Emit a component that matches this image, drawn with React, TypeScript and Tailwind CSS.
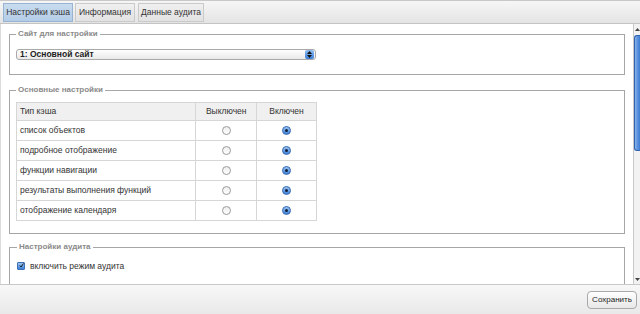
import React from "react";

const font = { fontFamily: '"Liberation Sans", Arial, sans-serif' };

function Radio({ checked }: { checked?: boolean }) {
  if (checked) {
    return (
      <span className="flex h-[9px] w-[9px] items-center justify-center rounded-full border border-[#3d6fb5] bg-gradient-to-b from-[#9cc4f0] to-[#3b7fd6]">
        <span className="h-[3px] w-[3px] rounded-full bg-[#12203a]" />
      </span>
    );
  }
  return (
    <span className="flex h-[9px] w-[9px] rounded-full border border-[#9a9a9a] bg-gradient-to-b from-[#eeeeee] to-[#ffffff]" />
  );
}

const rows = [
  "список объектов",
  "подробное отображение",
  "функции навигации",
  "результаты выполнения функций",
  "отображение календаря",
];

export default function App() {
  return (
    <div
      className="flex h-[314px] w-[640px] flex-col overflow-hidden bg-white text-[#333]"
      style={font}
    >
      {/* tab bar */}
      <div className="flex h-[24px] shrink-0 items-start gap-[2px] border-b border-t border-b-[#c4c4c4] border-t-[#c8c8c8] bg-gradient-to-b from-[#f6f6f6] to-[#e4e4e4] pl-[3px] pt-[2px]">
        <div className="flex h-[19px] w-[70px] items-center justify-center border border-[#98b4d2] bg-gradient-to-b from-[#c9dcef] to-[#b3cce6] text-[8.5px]">
          Настройки кэша
        </div>
        <div className="flex h-[19px] w-[60px] items-center justify-center border border-[#cacaca] bg-gradient-to-b from-[#f0f0f0] to-[#e2e2e2] text-[8.5px]">
          Информация
        </div>
        <div className="ml-[1px] flex h-[19px] w-[66px] items-center justify-center border border-[#cacaca] bg-gradient-to-b from-[#f0f0f0] to-[#e2e2e2] text-[8.5px]">
          Данные аудита
        </div>
      </div>

      {/* middle */}
      <div className="flex min-h-0 flex-1">
        <div className="min-w-0 flex-1 overflow-hidden border-l border-[#dcdcdc] pl-[8px] pr-[8px] pt-[5px]">
          {/* fieldset 1 */}
          <fieldset className="border border-[#a6a6a6] pb-[14px] pl-[6px]">
            <legend className="px-[2px] text-[8px] font-bold leading-[10px] text-[#8a8a8a]">
              Сайт для настройки
            </legend>
            <div className="mt-[10px] flex h-[11px] w-[300px] items-center justify-between rounded-[3px] border border-[#a9a9a9] bg-gradient-to-b from-[#ffffff] to-[#e9e9e9] pl-[3px]">
              <span className="text-[8.5px] font-semibold leading-none text-[#222]">
                1: Основной сайт
              </span>
              <span className="mr-[1px] flex h-[9px] w-[9px] flex-col items-center justify-center gap-[1px] rounded-[2px] bg-gradient-to-b from-[#8fbcf0] to-[#3a7ed8]">
                <svg width="5" height="3" viewBox="0 0 5 3">
                  <path d="M2.5 0 L5 3 L0 3 Z" fill="#111" />
                </svg>
                <svg width="5" height="3" viewBox="0 0 5 3">
                  <path d="M0 0 L5 0 L2.5 3 Z" fill="#111" />
                </svg>
              </span>
            </div>
          </fieldset>

          {/* fieldset 2 */}
          <fieldset className="mt-[10px] border border-[#a6a6a6] pb-[12px] pl-[6px]">
            <legend className="px-[2px] text-[8px] font-bold leading-[10px] text-[#8a8a8a]">
              Основные настройки
            </legend>
            <table className="mt-[7px] w-[301px] border-collapse text-[8.5px] text-[#333]">
              <thead>
                <tr className="h-[18px] bg-[#f0f0f0]">
                  <th className="w-[180px] border border-[#d6d6d6] pl-[3px] text-left font-normal">
                    Тип кэша
                  </th>
                  <th className="w-[61px] border border-[#d6d6d6] font-normal">
                    Выключен
                  </th>
                  <th className="w-[60px] border border-[#d6d6d6] font-normal">
                    Включен
                  </th>
                </tr>
              </thead>
              <tbody>
                {rows.map((r) => (
                  <tr key={r} className="h-[20px]">
                    <td className="border border-[#d6d6d6] pl-[3px]">{r}</td>
                    <td className="border border-[#d6d6d6] align-middle">
                      <div className="flex justify-center">
                        <Radio />
                      </div>
                    </td>
                    <td className="border border-[#d6d6d6] align-middle">
                      <div className="flex justify-center">
                        <Radio checked />
                      </div>
                    </td>
                  </tr>
                ))}
              </tbody>
            </table>
          </fieldset>

          {/* fieldset 3 */}
          <fieldset className="mt-[8px] h-[60px] border border-[#a6a6a6] pl-[7px]">
            <legend className="px-[2px] text-[8px] font-bold leading-[10px] text-[#8a8a8a]">
              Настройки аудита
            </legend>
            <div className="mt-[8px] flex items-center gap-[5px]">
              <span className="flex h-[8px] w-[8px] items-center justify-center rounded-[1px] border border-[#3d6fb5] bg-gradient-to-b from-[#9cc4f0] to-[#3b7fd6]">
                <svg width="9" height="9" viewBox="0 0 9 9" className="-mt-[2px] ml-[1px]">
                  <path d="M1.5 4.5 L3.8 7.2 L8 0.8" stroke="#111" strokeWidth="1.7" fill="none" />
                </svg>
              </span>
              <span className="text-[8.5px] text-[#333]">включить режим аудита</span>
            </div>
          </fieldset>
        </div>

        {/* scrollbar */}
        <div className="flex w-[7px] shrink-0 flex-col border-l border-[#c9c9c9] bg-[#f2f2f2]">
          <div className="flex h-[11px] items-center justify-center">
            <svg width="5" height="3" viewBox="0 0 5 3">
              <path d="M2.5 0 L5 3 L0 3 Z" fill="#444" />
            </svg>
          </div>
          <div className="h-[116px] rounded-l-[3px] border border-r-0 border-[#2f62b0] bg-gradient-to-r from-[#8ab4ea] via-[#5b93de] to-[#3e7bd2]" />
          <div className="flex-1" />
          <div className="flex h-[10px] items-center justify-center">
            <svg width="5" height="3" viewBox="0 0 5 3">
              <path d="M0 0 L5 0 L2.5 3 Z" fill="#444" />
            </svg>
          </div>
        </div>
      </div>

      {/* bottom bar */}
      <div className="flex h-[30px] shrink-0 items-center justify-end border-t border-[#c8c8c8] bg-gradient-to-b from-[#f7f7f7] to-[#e9e9e9] pr-[3px]">
        <button className="h-[18px] w-[50px] rounded-[4px] border border-[#a9a9a9] bg-gradient-to-b from-[#ffffff] to-[#e8e8e8] text-[8px] text-[#222]">
          Сохранить
        </button>
      </div>
    </div>
  );
}
